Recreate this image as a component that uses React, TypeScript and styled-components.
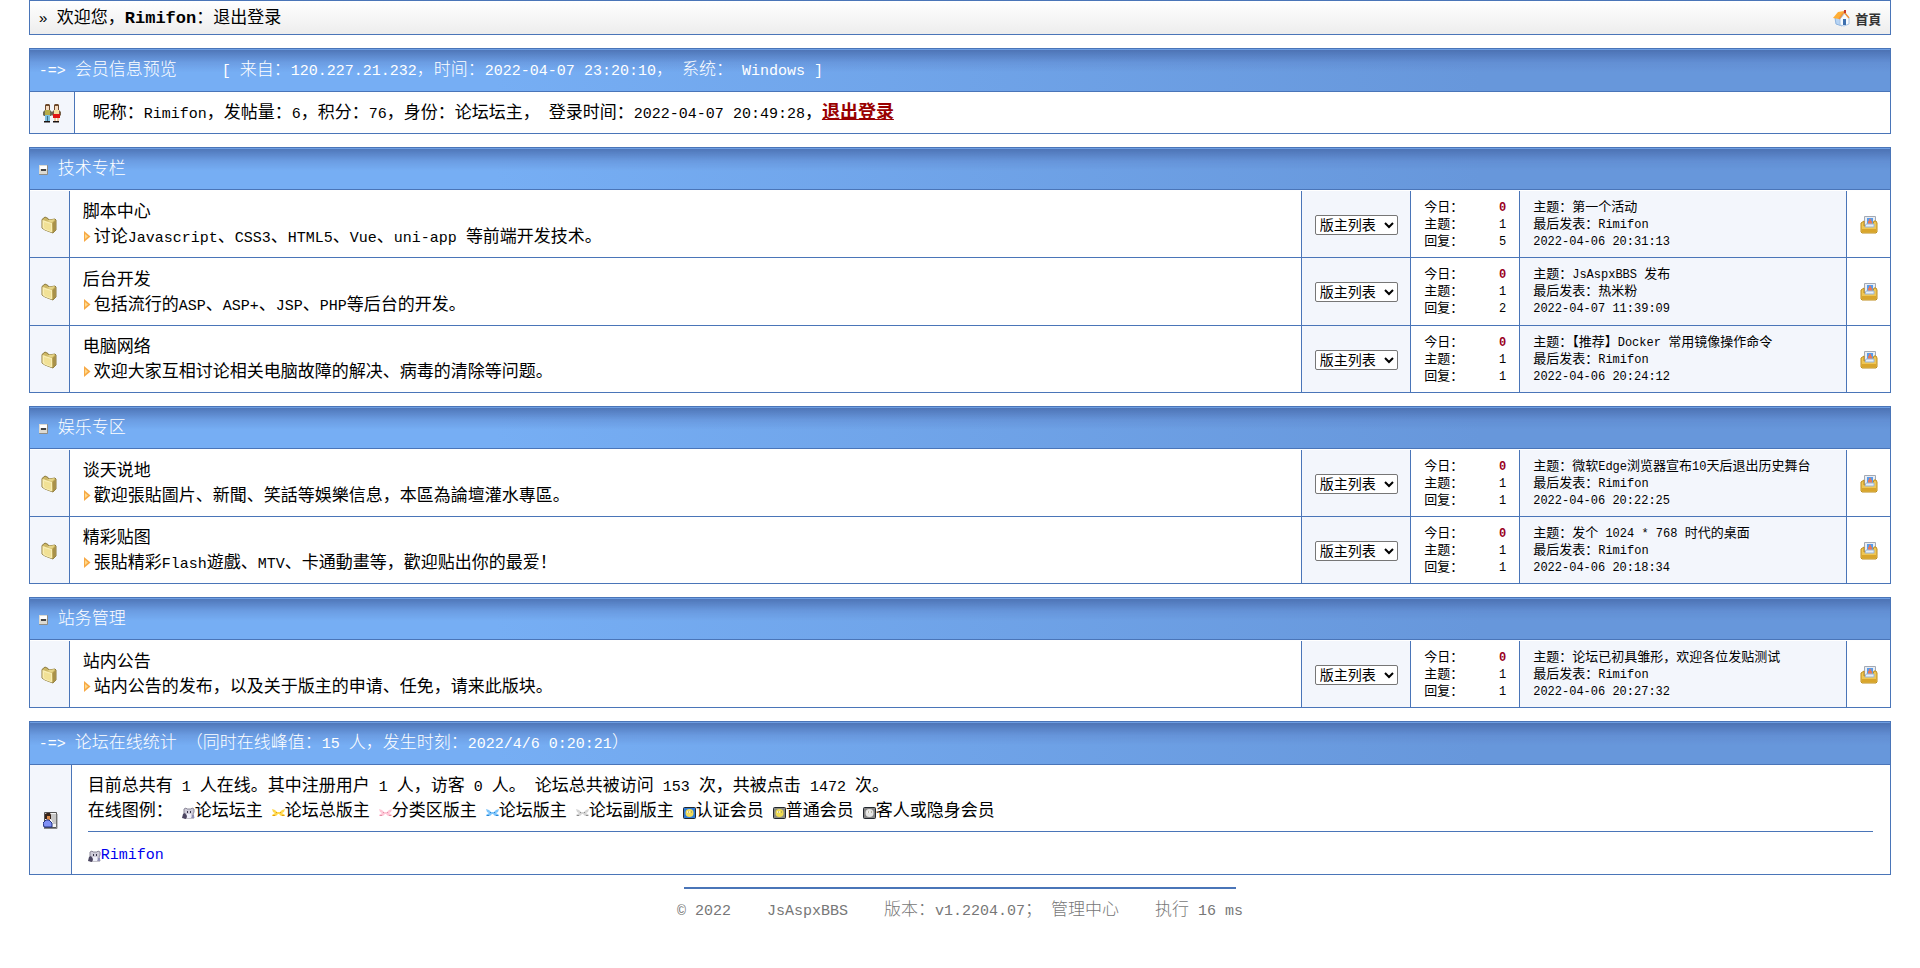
import React, { Fragment } from "react";
import styled, { createGlobalStyle } from "styled-components";

const LINE = "#4a75b8";
const CJK = '"Noto Sans CJK SC"';

const GlobalStyle = createGlobalStyle`
  body {
    margin: 0;
    background: #fff;
    color: #000;
    font: 400 17px/25px ${CJK}, sans-serif;
  }
  a { color: inherit; text-decoration: none; }
  * { box-sizing: border-box; }
`;

const Page = styled.div`
  width: 97%;
  margin: 0 auto;
`;

const Half = styled.span<{ $size: number }>`
  font-family: "Liberation Mono", monospace;
  font-size: ${(p) => p.$size}px;
  line-height: 1;
  white-space: pre;
`;

/* Sets half-width runs in the monospaced face, leaving full-width text as is. */
function Txt({ children, size = 15 }: { children: string; size?: number }) {
  const runs = children.split(/([\x20-\x7e\u00a0\u00a9\u00bb]+)/);
  return (
    <>
      {runs.map((run, i) =>
        i % 2 ? <Half key={i} $size={size}>{run}</Half> : <Fragment key={i}>{run}</Fragment>
      )}
    </>
  );
}

const TopBar = styled.header`
  display: flex;
  justify-content: space-between;
  align-items: center;
  height: 35px;
  padding: 0 9px 4px;
  border: 1px solid ${LINE};
  background: linear-gradient(#fff, #ededed);
`;

const HomeLink = styled.a`
  display: flex;
  align-items: center;
  gap: 5px;
  padding-top: 5px;
  font: 700 13px/17px "Noto Sans CJK TC", sans-serif;
  color: #333;
`;

const Panel = styled.section`
  margin-top: 13px;
  border: 1px solid ${LINE};
`;

const PanelHead = styled.h2<{ $compact?: boolean }>`
  display: flex;
  align-items: center;
  gap: 10px;
  height: ${(p) => (p.$compact ? 42 : 43)}px;
  margin: 0;
  padding: 0 9px 6px;
  border-bottom: 1px solid ${LINE};
  border-top: 1px solid #6f9fe3;
  color: #fff;
  font-size: 17px;
  font-weight: 300;
  background:
    linear-gradient(rgba(70, 105, 170, 0.8), rgba(90, 130, 200, 0.4) 30%, rgba(100, 150, 220, 0) 55%),
    linear-gradient(90deg, #76aef4 25%, #6797db 78%);
`;

const Toggle = styled.button`
  display: flex;
  margin-top: 7px;
  padding: 0;
  border: 0;
  background: none;
`;

const Row = styled.div`
  display: flex;
`;

const IconCell = styled.div<{ $w: number }>`
  display: flex;
  align-items: center;
  justify-content: center;
  flex: none;
  width: ${(p) => p.$w}px;
  padding-top: 2px;
  border-right: 1px solid ${LINE};
  background: #f3f6fc;
`;

const Member = styled.div`
  padding: 6px 18px 10px;
`;

const Logout = styled.a`
  color: #990000;
  font-size: 18px;
  line-height: 1;
  font-weight: 700;
  text-decoration: underline;
`;

const Online = styled.div`
  flex: 1;
  padding: 6px 17px 10px 16px;
`;

const OnlineLine = styled.div`
  display: flex;
  align-items: center;
`;

const Badge = styled.span`
  display: flex;
  align-items: center;
  margin-right: 9px;
  svg { margin-top: 8px; }
`;

const Rule = styled.hr`
  margin: 10px 0 7px;
  border: 0;
  border-top: 1px solid ${LINE};
`;

const UserLink = styled.a`
  color: #0000ee;
`;

const Boards = styled.table`
  width: 100%;
  padding-top: 1px;
  table-layout: fixed;
  border-collapse: separate;
  border-spacing: 0;
`;

const Cell = styled.td<{ $tint?: boolean; $center?: boolean }>`
  height: 68px;
  padding: 0 ${(p) => (p.$center ? 0 : 13)}px 4px;
  text-align: ${(p) => (p.$center ? "center" : "left")};
  vertical-align: middle;
  background: ${(p) => (p.$tint ? "#f3f6fc" : "#fff")};
  border-right: 1px solid ${LINE};
  border-bottom: 1px solid ${LINE};
  &:last-child { border-right: 0; }
  tr:first-child > & { height: 67px; }
  tr:last-child > & { height: 66px; border-bottom: 0; }
  svg { display: inline-block; vertical-align: middle; }
`;

const Desc = styled.div`
  display: flex;
  align-items: center;
  gap: 3px;
  svg { margin-top: 4px; }
`;

const Small = styled.div`
  font-size: 13px;
  line-height: 17px;
  white-space: nowrap;
`;

const Stat = styled(Small)`
  display: flex;
  justify-content: space-between;
  align-items: baseline;
`;

const Today = styled.b`
  color: #990022;
`;

const Moderators = styled.select`
  width: 83px;
  height: 20px;
  padding: 0;
  border: 1px solid #767676;
  border-radius: 2px;
  background: #fff;
  color: #000;
  font: 14px/16px "Liberation Sans", ${CJK}, sans-serif;
`;

const Footer = styled.footer`
  margin-top: 12px;
  color: #777;
  font-weight: 300;
  text-align: center;
  white-space: nowrap;
`;

const FooterRule = styled.hr`
  width: 552px;
  margin: 0 auto 6px;
  border: 0;
  border-top: 2px solid ${LINE};
`;

const FolderIcon = () => (
  <svg width="16" height="18" viewBox="0 0 16 18" aria-hidden="true">
    <path d="M1 3.500L4 1l3 1.500L8 4l6-1 1 1v10l-3 3-8-3-3-2z" fill="#cdb765" stroke="#8c7a3e" />
    <path d="M1.500 4l2 .5 1 .5 6.500 2v9.500l-7-2.500-2.500-2z" fill="#f9eeb4" />
    <path d="M3 6l7 2v7l-6-2-1-2z" fill="#f1e196" />
    <path d="M11.500 7L15 4v10l-3 3z" fill="#a8914a" />
    <path d="M8 4l6-1-3 3.500-5-1.500z" fill="#e6d588" />
  </svg>
);

const OpenIcon = () => (
  <svg width="18" height="18" viewBox="0 0 18 18" aria-hidden="true">
    <path d="M4.500 .5h11v11h-11z" fill="#e9edf3" stroke="#a3a9b3" />
    <path d="M7 2h6v6H7z" fill="#5a9be8" />
    <path d="M9 3h2v2H9zM8 5h4v3H8z" fill="#e07a60" />
    <path d="M1 7l3-2v5h9V8l1-3h2l1 2v9l-1 1H2l-1-1z" fill="#efc654" stroke="#bd8c1c" />
    <path d="M6 8h8v3H5z" fill="#e6f0fb" stroke="#9db6d4" />
    <path d="M2 13h14v3H2z" fill="#d9a52c" />
  </svg>
);

const ArrowIcon = () => (
  <svg width="8" height="11" viewBox="0 0 8 11" aria-hidden="true">
    <path d="M1 0l6.500 5.500L1 11z" fill="#f7a945" />
    <path d="M2 3l3 2.500L2 8z" fill="#ffd98a" />
  </svg>
);

const MinusIcon = () => (
  <svg width="9" height="10" viewBox="0 0 9 10" aria-hidden="true">
    <rect width="9" height="10" rx="1" fill="#8f8c84" />
    <path d="M0 0h8v9H0z" fill="#dcdad2" />
    <path d="M1 1h7v3H1z" fill="#fff" />
    <path d="M2 4h5v2H2z" fill="#444" />
  </svg>
);

const PeopleIcon = () => (
  <svg width="18" height="19" viewBox="0 0 18 19" aria-hidden="true">
    <path d="M2 1l1-1h3l1 1v5H2zM11 1l1-1h3l1 1v5h-5z" fill="#6e4a2c" />
    <path d="M3 2h3v4H3zM12 2h3v4h-3z" fill="#f6dcc0" />
    <path d="M0 8l2-2h5l2 2v3l-1 1H1l-1-1z" fill="#6b6a52" />
    <path d="M2 6h5v5H2z" fill="#b5ad48" />
    <path d="M9 8l2-2h5l2 2v3l-1 1h-7l-1-1z" fill="#77604a" />
    <path d="M11 6h5v5h-5z" fill="#f5dfa0" />
    <path d="M2 11h5v6H2z" fill="#7cc0e0" />
    <path d="M4 12h1v5H4z" fill="#3d6f8a" />
    <path d="M10 10h7v4h-7z" fill="#e01414" />
    <path d="M11 14h2v3h-2zM14 14h2v3h-2z" fill="#efc9a3" />
    <path d="M1 17h6v1.500H1zM10 17h6v1.500h-6z" fill="#1a1210" />
  </svg>
);

const HomeIcon = () => (
  <svg width="17" height="17" viewBox="0 0 17 17" aria-hidden="true">
    <path d="M2 8l7-4v12l-6-2z" fill="#b7d4f4" stroke="#8db4df" />
    <path d="M7 9l5-6 4 5v6l-5 2-4-1z" fill="#f7fbff" stroke="#a8c3e4" />
    <path d="M0 8l5-6 6-1-5 8z" fill="#ffae35" />
    <path d="M6 9l5-7 5 6" fill="none" stroke="#f0933a" strokeWidth="1.500" />
    <path d="M11 0h2v3h-2z" fill="#c8392b" />
    <path d="M10 9h3v6h-3z" fill="#3d6fae" />
  </svg>
);

const CardIcon = () => (
  <svg width="15" height="17" viewBox="0 0 15 17" aria-hidden="true">
    <path d="M1.500 .5h12v15h-12z" fill="#f4f4f4" stroke="#555" />
    <path d="M7 3h6M8 5h5M8 7h5M9 9h4M10 11h3" stroke="#9a9a9a" />
    <path d="M2 2l2-1h3l1 2v4H2z" fill="#36231a" />
    <path d="M4 4h3v4H4z" fill="#d98a4a" />
    <path d="M0 11l3-3h3l3 3v4H1z" fill="#7f90f5" stroke="#20307f" />
    <path d="M1 16.500h13V2" fill="none" stroke="#888" />
  </svg>
);

const BearIcon = () => (
  <svg width="13" height="12" viewBox="0 0 13 12" aria-hidden="true">
    <path d="M2 2l2-1 1 1h4l1-1 2 1v3l-1 2 1 4H2V7z" fill="#cfccd9" stroke="#8b8898" />
    <path d="M0 11l1-4 2-1 2 3-1 3z" fill="#4c4661" />
    <path d="M5 7h4v4H5z" fill="#f0f0fa" />
    <path d="M5 4h1v2H5zM8 4h1v2H8z" fill="#38344a" />
    <path d="M10 8h2v3h-2z" fill="#8f8fb8" />
  </svg>
);

const CrossIcon = ({ fill, dark }: { fill: string; dark: string }) => (
  <svg width="13" height="7" viewBox="0 0 13 7" aria-hidden="true">
    <path d="M0 0l3 1 2 2h3l2-2 3-1-1 3-2 1 3 2v1H9L7 5H6L4 7H0V6l3-2-2-1z" fill={fill} />
    <path d="M1 6.500h2M10 6.500h2M4 3.500h1M8 3.500h1" stroke={dark} />
  </svg>
);

const CoinIcon = ({ back, coin }: { back: string; coin: string }) => (
  <svg width="13" height="12" viewBox="0 0 13 12" aria-hidden="true">
    <rect x="0.500" y="0.500" width="12" height="11" rx="1" fill={back} stroke="#22272f" />
    <circle cx="6.500" cy="6" r="4" fill={coin} />
    <path d="M4 4h3v2H4z" fill="#fff" opacity="0.6" />
    <path d="M5 5h1M8 5h1" stroke="#8a8660" />
  </svg>
);

type Board = {
  name: string; desc: string; topics: string; replies: string;
  last: string; by: string; time: string;
};

const sections: { title: string; boards: Board[] }[] = [
  {
    title: "技术专栏",
    boards: [
      { name: "脚本中心", desc: "讨论Javascript、CSS3、HTML5、Vue、uni-app 等前端开发技术。", topics: "1", replies: "5", last: "第一个活动", by: "Rimifon", time: "2022-04-06 20:31:13" },
      { name: "后台开发", desc: "包括流行的ASP、ASP+、JSP、PHP等后台的开发。", topics: "1", replies: "2", last: "JsAspxBBS 发布", by: "热米粉", time: "2022-04-07 11:39:09" },
      { name: "电脑网络", desc: "欢迎大家互相讨论相关电脑故障的解决、病毒的清除等问题。", topics: "1", replies: "1", last: "【推荐】Docker 常用镜像操作命令", by: "Rimifon", time: "2022-04-06 20:24:12" },
    ],
  },
  {
    title: "娱乐专区",
    boards: [
      { name: "谈天说地", desc: "歡迎張貼圖片、新聞、笑話等娛樂信息，本區為論壇灌水專區。", topics: "1", replies: "1", last: "微软Edge浏览器宣布10天后退出历史舞台", by: "Rimifon", time: "2022-04-06 20:22:25" },
      { name: "精彩贴图", desc: "張貼精彩Flash遊戲、MTV、卡通動畫等，歡迎贴出你的最爱！", topics: "1", replies: "1", last: "发个 1024 * 768 时代的桌面", by: "Rimifon", time: "2022-04-06 20:18:34" },
    ],
  },
  {
    title: "站务管理",
    boards: [
      { name: "站内公告", desc: "站内公告的发布，以及关于版主的申请、任免，请来此版块。", topics: "1", replies: "1", last: "论坛已初具雏形，欢迎各位发贴测试", by: "Rimifon", time: "2022-04-06 20:27:32" },
    ],
  },
];

const legend = [
  { label: "论坛坛主", icon: <BearIcon /> },
  { label: "论坛总版主", icon: <CrossIcon fill="#ffd84a" dark="#e09a1c" /> },
  { label: "分类区版主", icon: <CrossIcon fill="#ffc6d6" dark="#e090a8" /> },
  { label: "论坛版主", icon: <CrossIcon fill="#7cc4fb" dark="#2f86d0" /> },
  { label: "论坛副版主", icon: <CrossIcon fill="#d4d4d4" dark="#8c8c8c" /> },
  { label: "认证会员", icon: <CoinIcon back="#2f7cd6" coin="#f3dc5a" /> },
  { label: "普通会员", icon: <CoinIcon back="#8c8c80" coin="#f0dc50" /> },
  { label: "客人或隐身会员", icon: <CoinIcon back="#858585" coin="#e6e6e6" /> },
];

function BoardRow({ board }: { board: Board }) {
  return (
    <tr>
      <Cell $tint $center><FolderIcon /></Cell>
      <Cell>
        <a href="#board">{board.name}</a>
        <Desc><ArrowIcon /><span><Txt>{board.desc}</Txt></span></Desc>
      </Cell>
      <Cell $tint $center>
        <Moderators aria-label={`${board.name} 版主列表`}>
          <option>版主列表</option>
        </Moderators>
      </Cell>
      <Cell>
        <Stat><span>今日：</span><Today><Txt size={12}>0</Txt></Today></Stat>
        <Stat><span>主题：</span><Txt size={12}>{board.topics}</Txt></Stat>
        <Stat><span>回复：</span><Txt size={12}>{board.replies}</Txt></Stat>
      </Cell>
      <Cell $tint>
        <Small>主题：<a href="#topic"><Txt size={12}>{board.last}</Txt></a></Small>
        <Small>最后发表：<Txt size={12}>{board.by}</Txt></Small>
        <Small><Txt size={12}>{board.time}</Txt></Small>
      </Cell>
      <Cell $center><OpenIcon /></Cell>
    </tr>
  );
}

export default function App() {
  return (
    <Page>
      <GlobalStyle />
      <TopBar>
        <div>
          <Txt>» </Txt>欢迎您，<b><Txt size={17}>Rimifon</Txt></b>：<a href="#logout">退出登录</a>
        </div>
        <HomeLink href="#home"><HomeIcon />首頁</HomeLink>
      </TopBar>

      <Panel>
        <PanelHead>
          <span><Txt>{"-=> 会员信息预览     [ 来自：120.227.21.232，时间：2022-04-07 23:20:10， 系统： Windows ]"}</Txt></span>
        </PanelHead>
        <Row>
          <IconCell $w={45}><PeopleIcon /></IconCell>
          <Member>
            <Txt>昵称：Rimifon，发帖量：6，积分：76，身份：论坛坛主， 登录时间：2022-04-07 20:49:28，</Txt>
            <Logout href="#logout">退出登录</Logout>
          </Member>
        </Row>
      </Panel>

      {sections.map((section) => (
        <Panel key={section.title}>
          <PanelHead $compact>
            <Toggle type="button" aria-label={`收起${section.title}`}><MinusIcon /></Toggle>
            <span>{section.title}</span>
          </PanelHead>
          <Boards>
            <colgroup>
              <col style={{ width: 40 }} />
              <col />
              <col style={{ width: 109 }} />
              <col style={{ width: 109 }} />
              <col style={{ width: 327 }} />
              <col style={{ width: 43 }} />
            </colgroup>
            <tbody>
              {section.boards.map((board) => <BoardRow key={board.name} board={board} />)}
            </tbody>
          </Boards>
        </Panel>
      ))}

      <Panel>
        <PanelHead>
          <span><Txt>{"-=> 论坛在线统计 （同时在线峰值：15 人，发生时刻：2022/4/6 0:20:21）"}</Txt></span>
        </PanelHead>
        <Row>
          <IconCell $w={42}><CardIcon /></IconCell>
          <Online>
            <div><Txt>目前总共有 1 人在线。其中注册用户 1 人，访客 0 人。 论坛总共被访问 153 次，共被点击 1472 次。</Txt></div>
            <OnlineLine>
              <span><Txt>在线图例： </Txt></span>
              {legend.map((item) => (
                <Badge key={item.label}>{item.icon}{item.label}</Badge>
              ))}
            </OnlineLine>
            <Rule />
            <OnlineLine>
              <Badge><BearIcon /><UserLink href="#user"><Txt>Rimifon</Txt></UserLink></Badge>
            </OnlineLine>
          </Online>
        </Row>
      </Panel>

      <Footer>
        <FooterRule />
        <Txt>{"© 2022    JsAspxBBS    版本：v1.2204.07； "}</Txt>
        <a href="#admin">管理中心</a>
        <Txt>{"    执行 16 ms"}</Txt>
      </Footer>
    </Page>
  );
}
